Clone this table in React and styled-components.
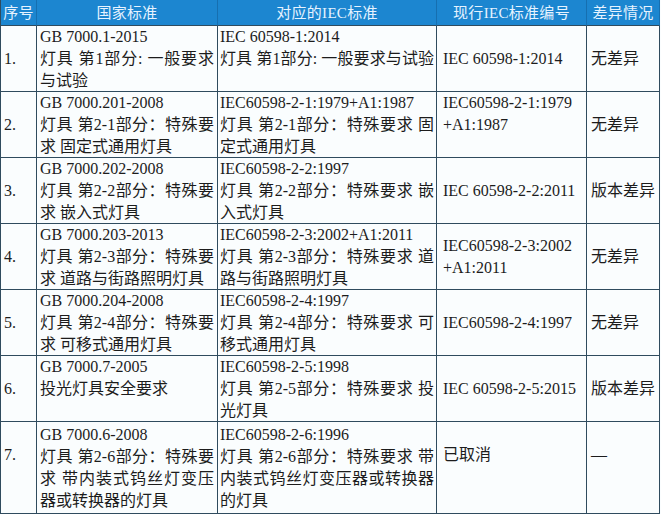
import React from "react";
import styled, { createGlobalStyle } from "styled-components";

const GlobalStyle = createGlobalStyle`
    html, body {
        margin: 0;
        padding: 0;
        background: #ffffff;
    }
    body {
        font-family: "Liberation Serif", "Noto Sans CJK SC", serif;
        color: #1c1c1c;
    }
`;

const Grid = styled.div`
    display: grid;
    grid-template-columns: 36px 181px 219px 150px 73px;
    grid-template-rows: 26px repeat(6, 66px) 92px;
    width: 660px;
    border-left: 1px solid #2f4b5e;
    background: #fafdfe;
`;

const Head = styled.div`
    display: flex;
    align-items: center;
    justify-content: center;
    background: #1c86d0;
    color: #e6f3ff;
    font-size: 15px;
    line-height: 18px;
    border-right: 1px solid #166fb0;
    border-bottom: 1px solid #2f4b5e;
    white-space: nowrap;
    letter-spacing: 0.3px;
`;

const Cell = styled.div`
    display: flex;
    flex-direction: column;
    justify-content: ${(p) => (p.$top ? "flex-start" : "center")};
    padding: 0 ${(p) => p.$px ?? 3}px ${(p) => p.$pb ?? 0}px;
    font-size: 16px;
    line-height: 22px;
    border-right: 1px solid #2f4b5e;
    border-bottom: 1px solid #2f4b5e;
    overflow: hidden;
`;

const Line = styled.span`
    display: block;
    white-space: nowrap;
    text-align: left;
    text-align-last: ${(p) => (p.$fill ? "justify" : "auto")};
`;

const rows = [
    {
        no: "1.",
        gb: [["GB 7000.1-2015"], ["灯具 第1部分: 一般要求", true], ["与试验"]],
        iec: [["IEC 60598-1:2014"], ["灯具 第1部分: 一般要求与试验", true]],
        iecTop: true,
        cur: ["IEC 60598-1:2014"],
        diff: "无差异",
    },
    {
        no: "2.",
        gb: [["GB 7000.201-2008"], ["灯具 第2-1部分：特殊要", true], ["求 固定式通用灯具"]],
        iec: [["IEC60598-2-1:1979+A1:1987"], ["灯具 第2-1部分：特殊要求 固", true], ["定式通用灯具"]],
        cur: ["IEC60598-2-1:1979", "+A1:1987"],
        curTop: true,
        diff: "无差异",
    },
    {
        no: "3.",
        gb: [["GB 7000.202-2008"], ["灯具 第2-2部分：特殊要", true], ["求 嵌入式灯具"]],
        iec: [["IEC60598-2-2:1997"], ["灯具 第2-2部分：特殊要求 嵌", true], ["入式灯具"]],
        cur: ["IEC 60598-2-2:2011"],
        diff: "版本差异",
    },
    {
        no: "4.",
        gb: [["GB 7000.203-2013"], ["灯具 第2-3部分：特殊要", true], ["求 道路与街路照明灯具"]],
        iec: [["IEC60598-2-3:2002+A1:2011"], ["灯具 第2-3部分：特殊要求 道", true], ["路与街路照明灯具"]],
        cur: ["IEC60598-2-3:2002", "+A1:2011"],
        diff: "无差异",
    },
    {
        no: "5.",
        gb: [["GB 7000.204-2008"], ["灯具 第2-4部分：特殊要", true], ["求 可移式通用灯具"]],
        iec: [["IEC60598-2-4:1997"], ["灯具 第2-4部分：特殊要求 可", true], ["移式通用灯具"]],
        cur: ["IEC60598-2-4:1997"],
        diff: "无差异",
    },
    {
        no: "6.",
        gb: [["GB 7000.7-2005"], ["投光灯具安全要求"]],
        gbTop: true,
        iec: [["IEC60598-2-5:1998"], ["灯具 第2-5部分：特殊要求 投", true], ["光灯具"]],
        cur: ["IEC 60598-2-5:2015"],
        diff: "版本差异",
    },
    {
        no: "7.",
        gb: [
            ["GB 7000.6-2008"],
            ["灯具 第2-6部分：特殊要", true],
            ["求 带内装式钨丝灯变压", true],
            ["器或转换器的灯具"],
        ],
        iec: [
            ["IEC60598-2-6:1996"],
            ["灯具 第2-6部分：特殊要求 带", true],
            ["内装式钨丝灯变压器或转换器", true],
            ["的灯具"],
        ],
        cur: ["已取消"],
        diff: "—",
        lift: 26,
    },
];

const headers = ["序号", "国家标准", "对应的IEC标准", "现行IEC标准编号", "差异情况"];

export default function App() {
    return (
        <>
            <GlobalStyle />
            <Grid>
                {headers.map((h) => (
                    <Head key={h}>{h}</Head>
                ))}
                {rows.map((r) => (
                    <React.Fragment key={r.no}>
                        <Cell $pb={r.lift}>
                            <Line>{r.no}</Line>
                        </Cell>
                        <Cell $top={r.gbTop}>
                            {r.gb.map(([t, fill]) => (
                                <Line key={t} $fill={fill}>
                                    {t}
                                </Line>
                            ))}
                        </Cell>
                        <Cell $px={2} $top={r.iecTop}>
                            {r.iec.map(([t, fill]) => (
                                <Line key={t} $fill={fill}>
                                    {t}
                                </Line>
                            ))}
                        </Cell>
                        <Cell $px={6} $top={r.curTop} $pb={r.lift}>
                            {r.cur.map((t) => (
                                <Line key={t}>{t}</Line>
                            ))}
                        </Cell>
                        <Cell $px={4} $pb={r.lift}>
                            <Line>{r.diff}</Line>
                        </Cell>
                    </React.Fragment>
                ))}
            </Grid>
        </>
    );
}
